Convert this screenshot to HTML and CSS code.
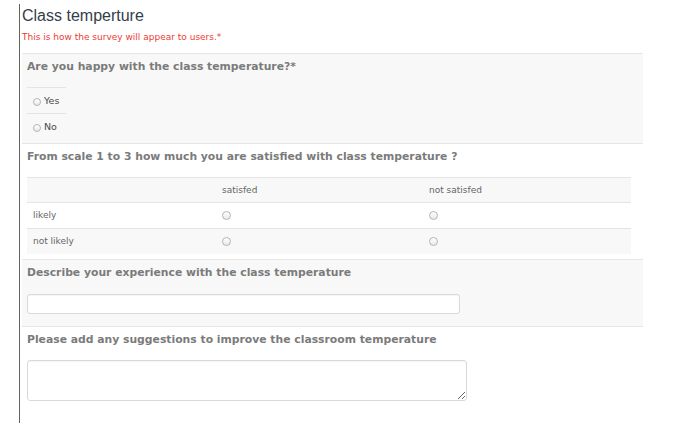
FILE: index.html
```html
<!DOCTYPE html>
<html lang="en">
<head>
<meta charset="utf-8">
<title>Class temperture</title>
<link rel="stylesheet" href="styles.css">
</head>
<body>
<div class="survey">
  <h1 class="title">Class temperture</h1>
  <p class="note">This is how the survey will appear to users.*</p>

  <section class="q q-shaded">
    <h2 class="q-text">Are you happy with the class temperature?*</h2>
    <ul class="options">
      <li class="option"><input class="radio radio-sm" type="radio" name="happy"><span class="opt-label">Yes</span></li>
      <li class="option"><input class="radio radio-sm" type="radio" name="happy"><span class="opt-label">No</span></li>
    </ul>
  </section>

  <section class="q q-matrix">
    <h2 class="q-text">From scale 1 to 3 how much you are satisfied with class temperature ?</h2>
    <table class="matrix">
      <thead>
        <tr><th class="col1"></th><th class="col2">satisfed</th><th>not satisfed</th></tr>
      </thead>
      <tbody>
        <tr><td>likely</td><td><input class="radio" type="radio" name="r1"></td><td><input class="radio" type="radio" name="r1"></td></tr>
        <tr class="alt"><td>not likely</td><td><input class="radio" type="radio" name="r2"></td><td><input class="radio" type="radio" name="r2"></td></tr>
      </tbody>
    </table>
  </section>

  <section class="q q-shaded q-input">
    <h2 class="q-text">Describe your experience with the class temperature</h2>
    <input class="text-input" type="text">
  </section>

  <section class="q q-area">
    <h2 class="q-text">Please add any suggestions to improve the classroom temperature</h2>
    <textarea class="text-area"></textarea>
  </section>
</div>
</body>
</html>
```

FILE: styles.css
```css
html, body {
  margin: 0;
  padding: 0;
  background: #ffffff;
}

body {
  font-family: "DejaVu Sans", Verdana, sans-serif;
}

.survey {
  margin: 4px 0 0 19px;
  border-left: 1px solid #5f665f;
  padding-left: 2px;
  width: 621px;
  height: 419px;
}

.title {
  margin: 0;
  padding-top: 3px;
  font-family: "Liberation Sans", Arial, sans-serif;
  font-size: 16px;
  line-height: 18px;
  font-weight: normal;
  color: #333e49;
}

.note {
  margin: 7px 0 10px 0;
  font-size: 9px;
  line-height: 11px;
  color: #ee3b33;
}

.q {
  border-top: 1px solid #e6e6e6;
  padding: 6px 0 0 5px;
}

.q-shaded {
  background: #f8f8f8;
}

.q-text {
  margin: 0;
  font-size: 10.8px;
  line-height: 14px;
  font-weight: bold;
  color: #7b7b7b;
}

.options {
  list-style: none;
  margin: 13px 0 0 0;
  padding: 0 0 4px 0;
}

.option {
  width: 33px;
  height: 25px;
  padding-left: 6px;
  border-top: 1px solid #e4e4e4;
  line-height: 25px;
  font-size: 9.5px;
  color: #4a4a4a;
  white-space: nowrap;
}

.radio {
  -webkit-appearance: none;
  appearance: none;
  box-sizing: border-box;
  display: inline-block;
  width: 9px;
  height: 9px;
  margin: 0;
  border: 1px solid #b4b4b4;
  border-radius: 50%;
  background: linear-gradient(#ffffff, #e9e9e9);
  vertical-align: -2px;
}

.radio-sm {
  width: 8px;
  height: 8px;
  margin-right: 3px;
}

.q-matrix {
  padding-bottom: 5px;
}

.matrix {
  margin-top: 13px;
  width: 604px;
  border-collapse: separate;
  border-spacing: 0;
  font-size: 9px;
  color: #666666;
}

.matrix th,
.matrix td {
  border-top: 1px solid #e4e4e4;
  padding: 0 0 0 6px;
  text-align: left;
  font-weight: normal;
  line-height: 11px;
}

.matrix th {
  height: 24px;
  background: #f8f8f8;
}

.matrix td {
  height: 25px;
}

.matrix .alt td {
  background: #f8f8f8;
}

.matrix .col1 {
  width: 183px;
}

.matrix .col2 {
  width: 201px;
}

.q-input {
  padding-bottom: 12px;
}

.text-input {
  display: block;
  box-sizing: border-box;
  margin-top: 14px;
  width: 433px;
  height: 20px;
  border: 1px solid #d9d9d9;
  border-radius: 3px;
  background: #ffffff;
  box-shadow: inset 0 1px 1px rgba(0, 0, 0, 0.04);
}

.text-area {
  display: block;
  box-sizing: border-box;
  margin-top: 13px;
  width: 440px;
  height: 41px;
  border: 1px solid #d9d9d9;
  border-radius: 3px;
  background: #ffffff;
  box-shadow: inset 0 1px 1px rgba(0, 0, 0, 0.04);
  resize: both;
}
```
